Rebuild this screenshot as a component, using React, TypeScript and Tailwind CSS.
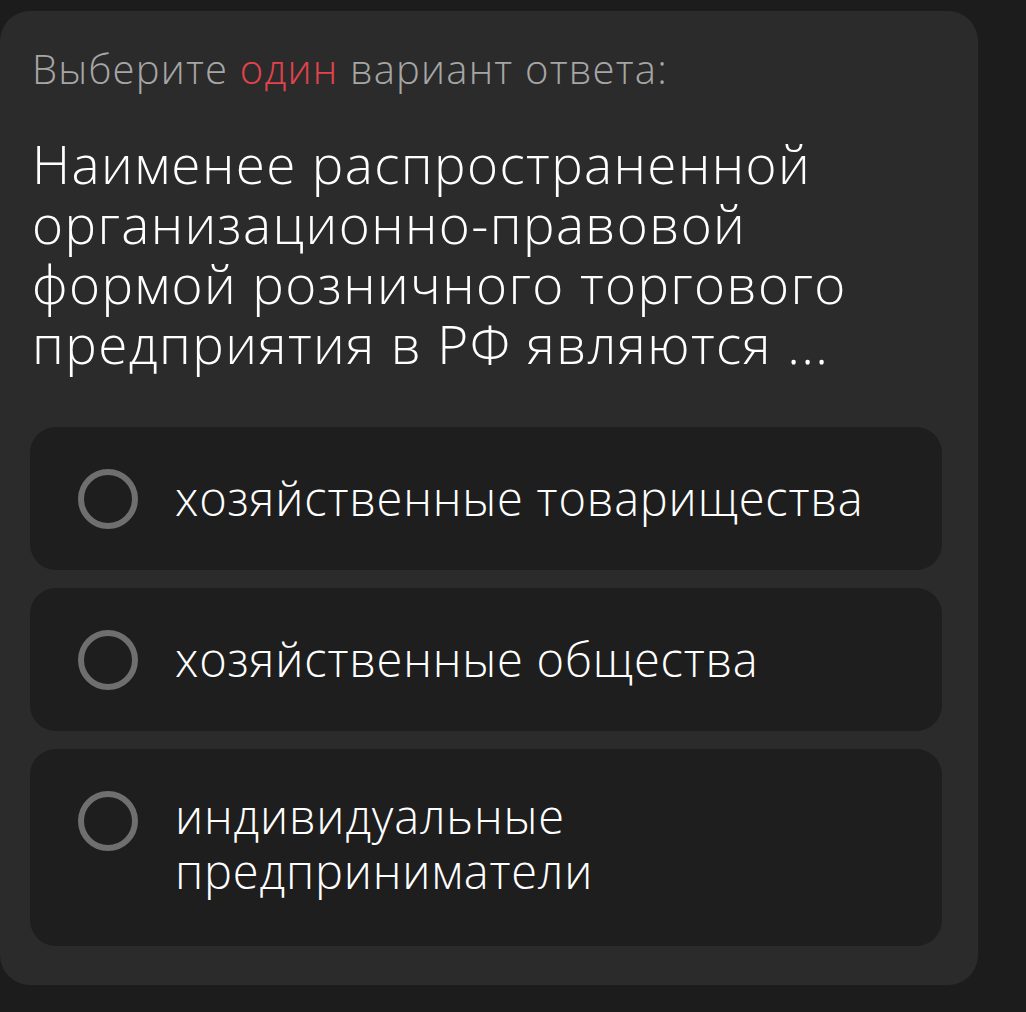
import React from "react";

const options = [
  { text: "хозяйственные товарищества", h: "h-[143px]" },
  { text: "хозяйственные общества", h: "h-[143px]" },
  { text: "индивидуальные предприниматели", h: "h-[197px]", multi: true },
];

function Radio() {
  return <div className="w-[60px] h-[60px] rounded-full border-[6px] border-[#6f6f6f] shrink-0" />;
}

export default function App() {
  return (
    <div className="w-[1026px] h-[1012px] bg-[#1c1c1c] overflow-hidden" style={{ fontFamily: "'Open Sans', Roboto, sans-serif" }}>
      <div className="mt-[11px] w-[978px] h-[974px] bg-[#2b2b2b] rounded-[30px] pl-[30px] pr-[36px] pt-[34px]">
        <div className="pl-[2px] text-[40px] leading-[48px] font-light tracking-[1.2px] text-[#a6a6a6]">
          Выберите <span className="text-[#e2434d]">один</span> вариант ответа:
        </div>
        <div className="pl-[2px] mt-[41px] text-[53px] leading-[60px] font-[350] tracking-[1.4px] text-white">
          <div>Наименее распространенной</div>
          <div>организационно-правовой</div>
          <div>формой розничного торгового</div>
          <div>предприятия в РФ являются ...</div>
        </div>
        <div className="mt-[53px] flex flex-col gap-[18px]">
          {options.map((o, i) => (
            <div
              key={i}
              className={`${o.h} bg-[#1e1e1e] rounded-[26px] pl-[48px] pr-[40px] flex ${o.multi ? "items-start pt-[42px]" : "items-center"}`}
            >
              <Radio />
              <div className={`ml-[37px] text-[47px] leading-[55px] font-[350] tracking-[0.8px] text-white ${o.multi ? "w-[440px] -mt-[2px]" : ""}`}>
                {o.text}
              </div>
            </div>
          ))}
        </div>
      </div>
    </div>
  );
}
